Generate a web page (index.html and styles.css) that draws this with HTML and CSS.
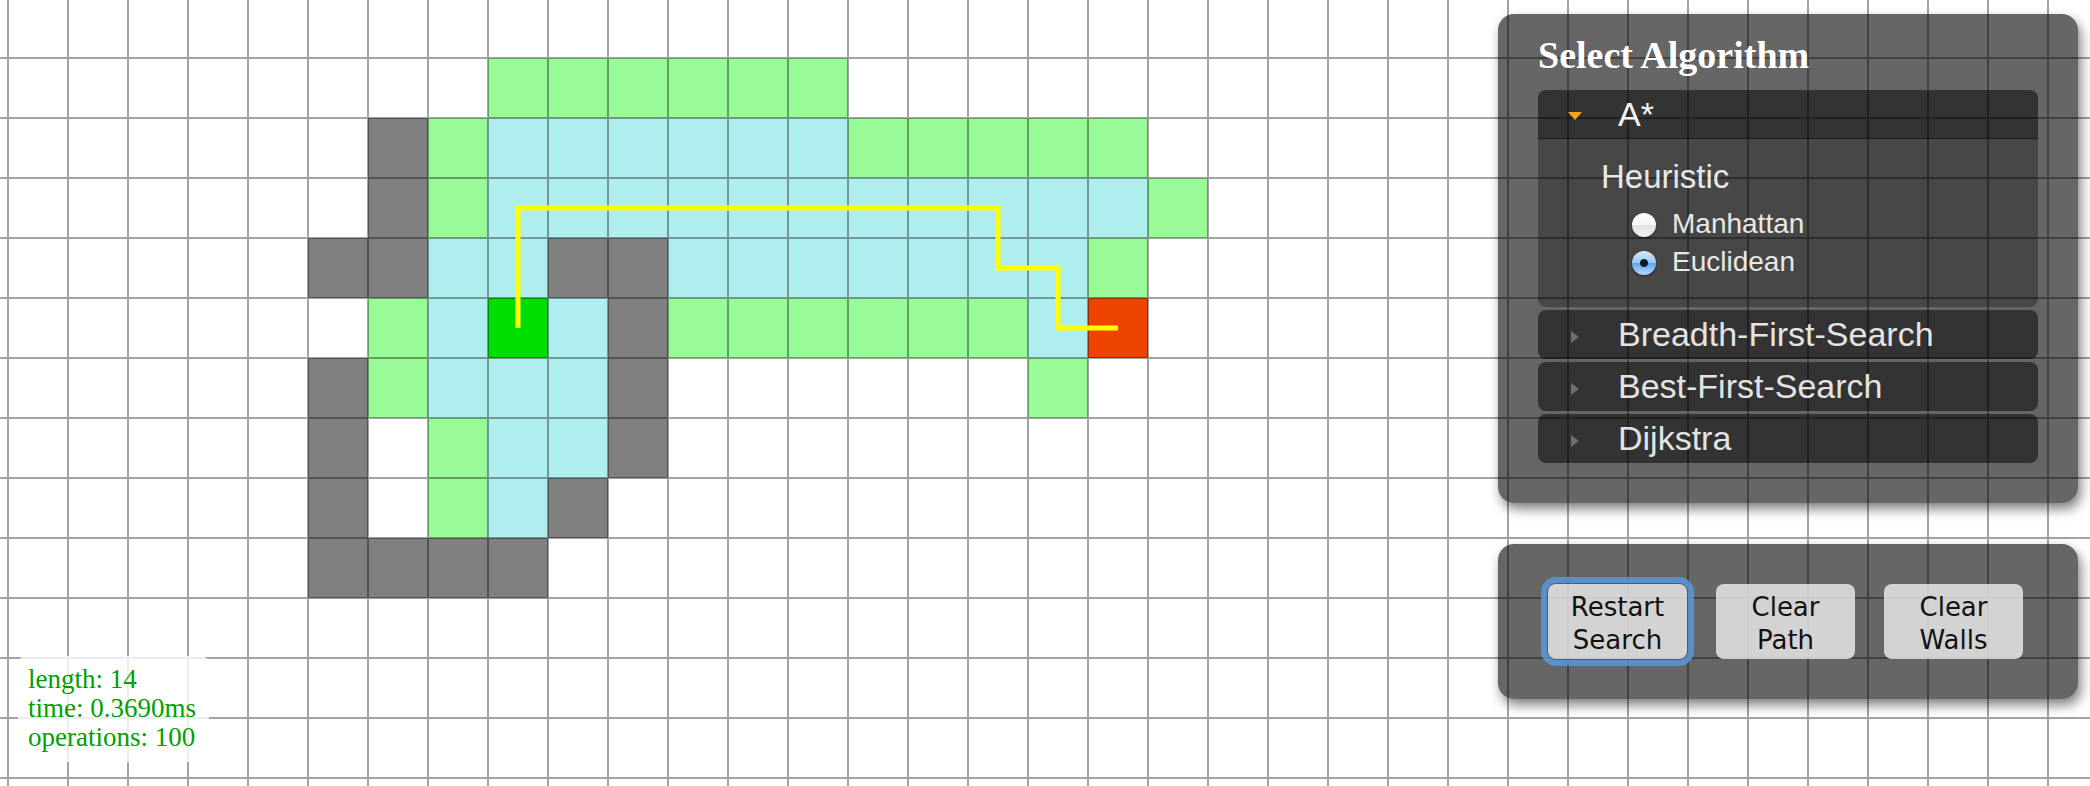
FILE: index.html
```html
<!DOCTYPE html>
<html lang="en">
<head>
    <meta charset="UTF-8">
    <meta name="viewport" content="width=device-width, initial-scale=1.0">
    <title>PathFinding.js</title>

    <link rel="stylesheet" href="styles.css">
</head>
<body>

    <!-- Grid canvas: cells are in grid units, one unit = 60px -->
    <svg class="board" width="2090" height="786" xmlns="http://www.w3.org/2000/svg">
        <defs>
            <pattern id="gridLines" x="7" y="-3" width="60" height="60" patternUnits="userSpaceOnUse">
                <path class="grid-line" d="M0 0H60V2H0Z M0 0H2V60H0Z"/>
            </pattern>
        </defs>

        <rect class="node-normal" width="2090" height="786"/>

        <g class="nodes" transform="translate(8 -2) scale(60)">
            <!-- walls -->
            <rect class="node-blocked" x="6" y="2" width="1" height="2"/>
            <rect class="node-blocked" x="5" y="4" width="2" height="1"/>
            <rect class="node-blocked" x="9" y="4" width="2" height="1"/>
            <rect class="node-blocked" x="10" y="5" width="1" height="3"/>
            <rect class="node-blocked" x="5" y="6" width="1" height="3"/>
            <rect class="node-blocked" x="9" y="8" width="1" height="1"/>
            <rect class="node-blocked" x="5" y="9" width="4" height="1"/>

            <!-- opened -->
            <rect class="node-opened" x="8" y="1" width="6" height="1"/>
            <rect class="node-opened" x="7" y="2" width="1" height="2"/>
            <rect class="node-opened" x="14" y="2" width="5" height="1"/>
            <rect class="node-opened" x="19" y="3" width="1" height="1"/>
            <rect class="node-opened" x="18" y="4" width="1" height="1"/>
            <rect class="node-opened" x="6" y="5" width="1" height="2"/>
            <rect class="node-opened" x="11" y="5" width="6" height="1"/>
            <rect class="node-opened" x="17" y="6" width="1" height="1"/>
            <rect class="node-opened" x="7" y="7" width="1" height="2"/>

            <!-- closed -->
            <rect class="node-closed" x="8" y="2" width="6" height="1"/>
            <rect class="node-closed" x="8" y="3" width="11" height="1"/>
            <rect class="node-closed" x="7" y="4" width="2" height="1"/>
            <rect class="node-closed" x="11" y="4" width="7" height="1"/>
            <rect class="node-closed" x="7" y="5" width="1" height="1"/>
            <rect class="node-closed" x="9" y="5" width="1" height="1"/>
            <rect class="node-closed" x="17" y="5" width="1" height="1"/>
            <rect class="node-closed" x="7" y="6" width="3" height="1"/>
            <rect class="node-closed" x="8" y="7" width="2" height="1"/>
            <rect class="node-closed" x="8" y="8" width="1" height="1"/>

            <!-- start / end -->
            <rect class="node-start" x="8" y="5" width="1" height="1"/>
            <rect class="node-end" x="18" y="5" width="1" height="1"/>
        </g>

        <rect class="grid" width="2090" height="786"/>

        <polyline class="path" points="518,328 518,208 998,208 998,268 1058,268 1058,328 1118,328"/>
    </svg>

    <!-- Search statistics -->
    <div class="stats">
        <div>length: 14</div>
        <div>time: 0.3690ms</div>
        <div>operations: 100</div>
    </div>

    <div class="controls">
        <!-- Algorithm selection -->
        <div class="panel algorithms">
            <h3>Select Algorithm</h3>

            <div class="accordion">
                <div class="acc-header active"><span class="arrow"></span>A*</div>
                <div class="acc-content">
                    <div class="option-title">Heuristic</div>
                    <label class="radio"><input type="radio" name="heuristic" value="manhattan">Manhattan</label>
                    <label class="radio"><input type="radio" name="heuristic" value="euclidean" checked>Euclidean</label>
                </div>

                <div class="acc-header"><span class="arrow"></span>Breadth-First-Search</div>
                <div class="acc-header"><span class="arrow"></span>Best-First-Search</div>
                <div class="acc-header"><span class="arrow"></span>Dijkstra</div>
            </div>
        </div>

        <!-- Actions -->
        <div class="panel actions">
            <button class="focused">Restart<br>Search</button>
            <button>Clear<br>Path</button>
            <button>Clear<br>Walls</button>
        </div>
    </div>

</body>
</html>
```

FILE: styles.css
```css
/* General Page Styling */
body {
    margin: 0;
    padding: 0;
    overflow: hidden;
    font-family: 'Liberation Sans', Arial, sans-serif;
    background: #FFFFFF;
}

/* Grid Canvas */
.board {
    display: block;
}

.node-normal  { fill: #FFFFFF; }
.node-blocked { fill: #808080; }
.node-opened  { fill: #98FB98; }
.node-closed  { fill: #AFEEEE; }
.node-start   { fill: #00DD00; }
.node-end     { fill: #EE4400; }

.nodes rect {
    shape-rendering: crispEdges;
}

.grid-line {
    fill: rgba(0, 0, 0, 0.36);
}

.grid {
    fill: url(#gridLines);
}

.path {
    fill: none;
    stroke: #FFFF00;
    stroke-width: 5;
    stroke-linejoin: miter;
    stroke-linecap: butt;
}

/* Stats box - bottom left */
.stats {
    position: absolute;
    left: 18px;
    bottom: 24px;
    padding: 9px 13px 10px 10px;
    background: rgba(255, 255, 255, 0.8);
    border-radius: 8px;
    font-family: 'Liberation Serif', 'Times New Roman', serif;
    font-size: 27px;
    line-height: 29px;
    color: #00A000;
}

/* Right hand controls */
.controls {
    position: absolute;
    top: 14px;
    right: 12px;
    width: 580px;
    display: flex;
    flex-direction: column;
    gap: 41px;
}

.panel {
    background: rgba(0, 0, 0, 0.6);
    border-radius: 16px;
    box-shadow: 3px 6px 12px rgba(0, 0, 0, 0.5);
}

/* Algorithm Panel */
.algorithms {
    padding: 22px 40px 40px 40px;
}

.algorithms h3 {
    margin: 0 0 16px 0;
    font-family: 'Liberation Serif', 'Times New Roman', serif;
    font-weight: bold;
    font-size: 38px;
    line-height: 38px;
    color: #FFFFFF;
}

.acc-header {
    display: flex;
    align-items: center;
    height: 49px;
    margin-top: 3px;
    padding-left: 30px;
    background: rgba(0, 0, 0, 0.5);
    border-radius: 8px;
    font-size: 34px;
    line-height: 49px;
    color: #E4E4E4;
}

.acc-header.active {
    margin-top: 0;
    height: 48px;
    border-radius: 8px 8px 0 0;
    border-bottom: 1px solid rgba(0, 0, 0, 0.45);
    color: #F4F4F4;
}

.arrow {
    width: 14px;
    height: 14px;
    margin: 4px 36px 0 0;
    display: flex;
    align-items: center;
    justify-content: center;
}

.arrow::before {
    content: "";
    border-top: 6px solid transparent;
    border-bottom: 6px solid transparent;
    border-left: 8px solid #6E6E6E;
}

.active .arrow::before {
    border-left: 7px solid transparent;
    border-right: 7px solid transparent;
    border-top: 8px solid #F7A21B;
    border-bottom: 0;
}

.acc-content {
    padding: 19px 0 26px 63px;
    background: rgba(0, 0, 0, 0.3);
    border-radius: 0 0 8px 8px;
    color: #E8E8E8;
}

.option-title {
    font-size: 33px;
    line-height: 38px;
}

.radio {
    display: flex;
    align-items: center;
    gap: 16px;
    margin-left: 31px;
    font-size: 28px;
    line-height: 38px;
}

.option-title + .radio {
    margin-top: 9px;
}

.radio input {
    appearance: none;
    -webkit-appearance: none;
    width: 24px;
    height: 24px;
    margin: 2px 0 0 0;
    border-radius: 50%;
    background: linear-gradient(#FFFFFF, #F6F6F6 50%, #E2E2E2 51%, #F2F2F2);
    box-shadow: 0 1px 2px rgba(0, 0, 0, 0.5);
}

.radio input:checked {
    background:
        radial-gradient(circle, #0B1A2E 0 3.5px, transparent 4.5px),
        linear-gradient(#D8ECFF, #93C6F6 50%, #5FA6EC 51%, #B4DAFF);
}

/* Action Buttons */
.actions {
    display: flex;
    gap: 29px;
    padding: 40px 50px;
}

.actions button {
    width: 139px;
    height: 75px;
    padding: 4px 0 0 0;
    border: none;
    border-radius: 8px;
    background: rgba(230, 230, 230, 0.85);
    font-family: 'DejaVu Sans', Verdana, sans-serif;
    font-size: 26px;
    line-height: 33px;
    color: #111111;
    cursor: pointer;
}

.actions button.focused {
    box-shadow: 0 0 0 1px rgba(60, 60, 60, 0.6), 0 0 0 7px rgba(88, 150, 220, 0.85);
}
```
